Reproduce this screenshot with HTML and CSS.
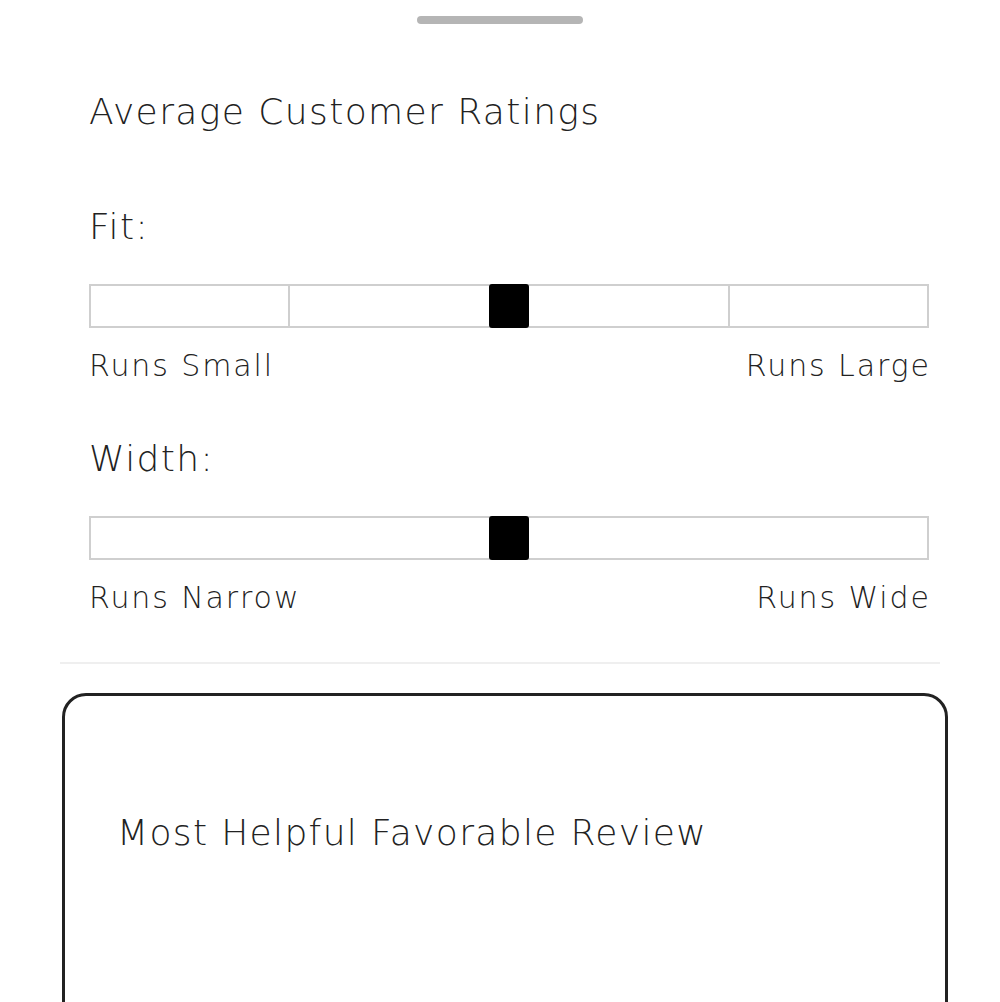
FILE: index.html
```html
<!DOCTYPE html>
<html lang="en">
<head>
  <meta charset="UTF-8" />
  <meta name="viewport" content="width=device-width, initial-scale=1.0"/>
  <title>Customer Ratings</title>
  <link rel="stylesheet" href="styles.css">
</head>
<body>
  <div class="handle"></div>

  <section class="ratings">
    <h2 class="ratings-title">Average Customer Ratings</h2>

    <div class="rating">
      <p class="rating-label">Fit:</p>
      <div class="scale scale-fit">
        <span class="seg seg-side"></span>
        <span class="seg seg-mid"></span>
        <span class="seg seg-side"></span>
        <span class="thumb" style="left: 50%"></span>
      </div>
      <div class="scale-ends">
        <span>Runs Small</span>
        <span>Runs Large</span>
      </div>
    </div>

    <div class="rating">
      <p class="rating-label">Width:</p>
      <div class="scale">
        <span class="seg"></span>
        <span class="thumb" style="left: 50%"></span>
      </div>
      <div class="scale-ends">
        <span>Runs Narrow</span>
        <span>Runs Wide</span>
      </div>
    </div>
  </section>

  <hr class="divider">

  <div class="review-card">
    <h3 class="review-title">Most Helpful Favorable Review</h3>
  </div>
</body>
</html>
```

FILE: styles.css
```css
body {
  margin: 0;
  background: #fff;
  color: #222;
  font-family: "DejaVu Sans", Lato, sans-serif;
  font-weight: 200;
}

.handle {
  width: 166px;
  height: 8px;
  margin: 16px auto 0;
  border-radius: 4px;
  background: #b5b5b5;
}

.ratings {
  padding: 0 71px 0 89px;
}

.ratings-title {
  margin: 70px 0 0;
  font-size: 36px;
  font-weight: 200;
  line-height: 1;
  letter-spacing: 1.4px;
}

.rating-label {
  margin: 79px 0 39px;
  font-size: 36px;
  line-height: 1;
  letter-spacing: 1.4px;
}

.rating + .rating .rating-label {
  margin-top: 60px;
}

.scale {
  position: relative;
  display: flex;
  height: 40px;
  border: 2px solid #cfcfcf;
}

.seg {
  flex: 1;
}

.scale-fit .seg-side {
  flex: 0 0 197px;
}

.scale-fit .seg-mid {
  border-left: 2px solid #cfcfcf;
  border-right: 2px solid #cfcfcf;
}

.thumb {
  position: absolute;
  top: -2px;
  bottom: -2px;
  width: 40px;
  margin-left: -20px;
  border-radius: 3px;
  background: #000;
}

.scale-ends {
  display: flex;
  justify-content: space-between;
  margin-top: 23px;
  font-size: 30px;
  line-height: 1;
  letter-spacing: 1.9px;
}

.scale-ends span:last-child {
  margin-right: -1.9px;
}

.divider {
  margin: 49px 60px 0;
  border: 0;
  border-top: 2px solid #efefef;
}

.review-card {
  min-height: 400px;
  margin: 29px 52px 0 62px;
  padding: 119px 52px 0;
  border: 3px solid #222;
  border-radius: 24px;
}

.review-title {
  margin: 0;
  font-size: 36px;
  font-weight: 200;
  line-height: 1;
  letter-spacing: 1.35px;
}
```
